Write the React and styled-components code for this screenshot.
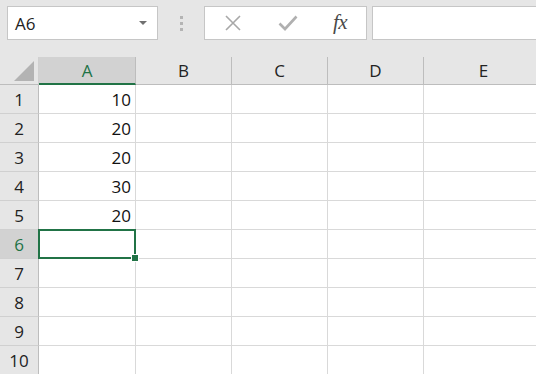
import React from 'react';
import styled, { createGlobalStyle } from 'styled-components';

const GlobalStyle = createGlobalStyle`
    html, body {
        margin: 0;
        padding: 0;
        background: #ffffff;
        overflow: hidden;
    }
    body {
        font-family: "Open Sans", "Noto Sans", sans-serif;
    }
`;

const Window = styled.div`
    width: 536px;
    height: 374px;
    overflow: hidden;
    background: #ffffff;
`;

const FormulaBar = styled.div`
    display: flex;
    align-items: flex-start;
    height: 57px;
    box-sizing: border-box;
    padding: 6px 0 0 7px;
    background: #e6e6e6;
`;

const NameBox = styled.div`
    display: flex;
    align-items: center;
    justify-content: space-between;
    width: 151px;
    height: 34px;
    box-sizing: border-box;
    padding: 0 10px 0 7px;
    background: #ffffff;
    border: 1px solid #c6c6c6;
    font-size: 17px;
    color: #222;
`;

const DropArrow = styled.span`
    width: 0;
    height: 0;
    border-left: 4px solid transparent;
    border-right: 4px solid transparent;
    border-top: 4px solid #707070;
`;

const Grip = styled.div`
    display: flex;
    flex-direction: column;
    gap: 3px;
    width: 46px;
    padding-top: 10px;
    align-items: center;
`;

const GripDot = styled.span`
    width: 3px;
    height: 3px;
    background: #b4b4b4;
`;

const ButtonBox = styled.div`
    display: flex;
    align-items: center;
    width: 163px;
    height: 34px;
    box-sizing: border-box;
    background: #ffffff;
    border: 1px solid #c6c6c6;
`;

const BarButton = styled.span`
    display: flex;
    align-items: center;
    justify-content: center;
    width: ${p => p.w}px;
    height: 100%;
`;

const Fx = styled.span`
    font-family: "Liberation Serif", "DejaVu Serif", serif;
    font-style: italic;
    font-size: 21px;
    color: #4a4a4a;
    letter-spacing: -0.5px;
    margin-top: -2px;
`;

const FormulaInput = styled.div`
    flex: 1;
    height: 34px;
    margin-left: 5px;
    box-sizing: border-box;
    background: #ffffff;
    border: 1px solid #c6c6c6;
    border-right: none;
`;

const Grid = styled.div`
    display: grid;
    grid-template-columns: 39px 97px 96px 96px 96px 120px;
    grid-auto-rows: 29px;
    grid-template-rows: 28px;
`;

const Corner = styled.div`
    position: relative;
    background: #e6e6e6;
    border-bottom: 1px solid #bdbdbd;
    border-right: 1px solid #d0d0d0;
    box-sizing: border-box;
`;

const CornerTriangle = styled.span`
    position: absolute;
    right: 4px;
    bottom: 3px;
    width: 0;
    height: 0;
    border-left: 20px solid transparent;
    border-bottom: 20px solid #b3b3b3;
`;

const ColHeader = styled.div`
    display: flex;
    align-items: center;
    justify-content: center;
    box-sizing: border-box;
    background: ${p => (p.active ? '#d2d2d2' : '#e6e6e6')};
    border-right: 1px solid #bdbdbd;
    border-bottom: ${p => (p.active ? '2px solid #217346' : '1px solid #bdbdbd')};
    font-size: 17px;
    color: ${p => (p.active ? '#217346' : '#222')};
    padding-top: ${p => (p.active ? '1px' : '0')};
`;

const RowHeader = styled.div`
    display: flex;
    align-items: center;
    justify-content: center;
    box-sizing: border-box;
    background: ${p => (p.active ? '#d2d2d2' : '#e6e6e6')};
    border-right: 1px solid ${p => (p.active ? '#217346' : '#bdbdbd')};
    border-bottom: 1px solid #d0d0d0;
    font-size: 17px;
    color: ${p => (p.active ? '#217346' : '#222')};
`;

const Cell = styled.div`
    position: relative;
    display: flex;
    align-items: center;
    justify-content: flex-end;
    box-sizing: border-box;
    padding-right: 4px;
    border-right: 1px solid #d9d9d9;
    border-bottom: 1px solid #d9d9d9;
    font-size: 17px;
    color: #111;
`;

const Selection = styled.div`
    position: absolute;
    left: -1px;
    top: -1px;
    right: -1px;
    bottom: -1px;
    border: 2px solid #217346;
    pointer-events: none;
    z-index: 2;
`;

const FillHandle = styled.span`
    position: absolute;
    right: -5px;
    bottom: -5px;
    width: 6px;
    height: 6px;
    background: #217346;
    border: 1px solid #ffffff;
`;

const columns = ['A', 'B', 'C', 'D', 'E'];
const values = { 1: 10, 2: 20, 3: 20, 4: 30, 5: 20 };
const rows = [1, 2, 3, 4, 5, 6, 7, 8, 9, 10];

const App = () => {
    return (
        <Window>
            <GlobalStyle />
            <FormulaBar>
                <NameBox>
                    <span>A6</span>
                    <DropArrow />
                </NameBox>
                <Grip>
                    <GripDot />
                    <GripDot />
                    <GripDot />
                </Grip>
                <ButtonBox>
                    <BarButton w={56}>
                        <svg width="18" height="18" viewBox="0 0 18 18">
                            <path d="M2 2 L16 16 M16 2 L2 16" stroke="#a8a8a8" strokeWidth="1.6" fill="none" />
                        </svg>
                    </BarButton>
                    <BarButton w={54}>
                        <svg width="20" height="16" viewBox="0 0 20 16">
                            <path d="M1.5 8.5 L7 14 L18.5 1.5" stroke="#b0b0b0" strokeWidth="2.6" fill="none" />
                        </svg>
                    </BarButton>
                    <BarButton w={50}>
                        <Fx>fx</Fx>
                    </BarButton>
                </ButtonBox>
                <FormulaInput />
            </FormulaBar>
            <Grid>
                <Corner>
                    <CornerTriangle />
                </Corner>
                {columns.map(c => (
                    <ColHeader key={c} active={c === 'A'}>{c}</ColHeader>
                ))}
                {rows.map(r => (
                    <React.Fragment key={r}>
                        <RowHeader active={r === 6}>{r}</RowHeader>
                        {columns.map(c => (
                            <Cell key={c}>
                                {c === 'A' && values[r]}
                                {c === 'A' && r === 6 && (
                                    <Selection>
                                        <FillHandle />
                                    </Selection>
                                )}
                            </Cell>
                        ))}
                    </React.Fragment>
                ))}
            </Grid>
        </Window>
    );
};

export default App;
